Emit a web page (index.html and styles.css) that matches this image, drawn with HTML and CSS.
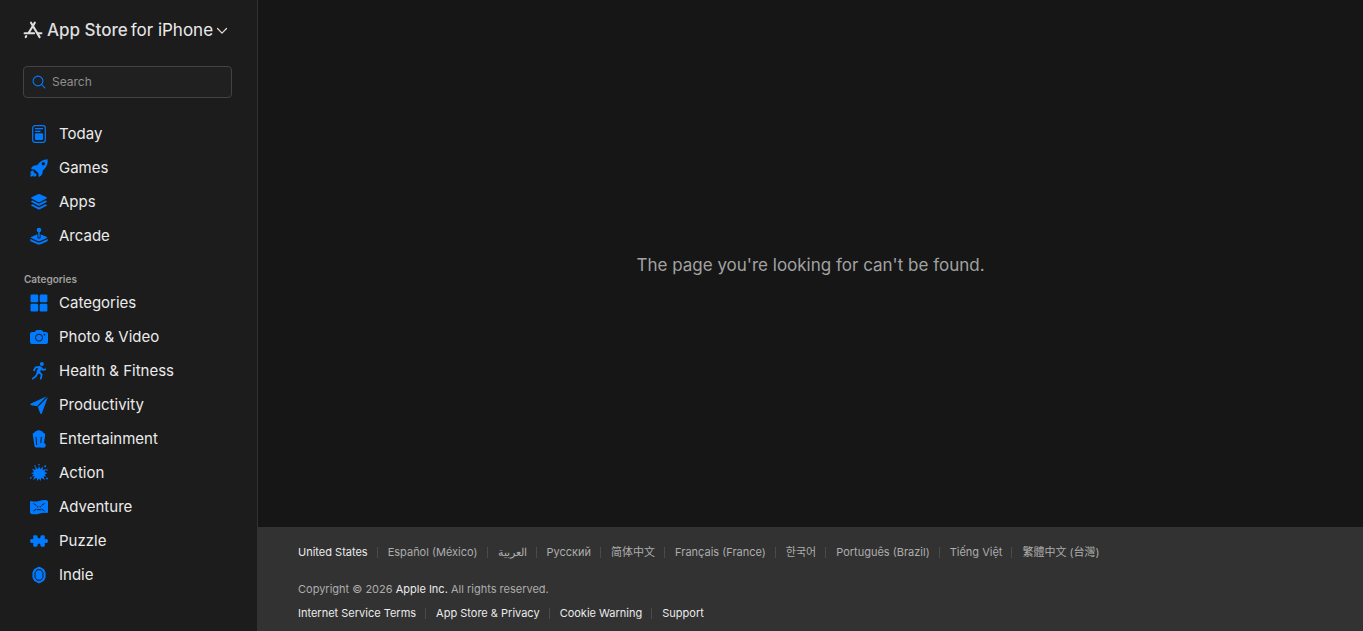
FILE: index.html
```html
<!DOCTYPE html>
<html lang="en">
<head>
    <meta charset="UTF-8">
    <meta name="viewport" content="width=device-width, initial-scale=1.0">
    <title>App Store</title>
    <link rel="stylesheet" href="styles.css">
</head>
<body>
    <div class="app">
        <aside class="sidebar">
            <button type="button" class="platform">
                <svg class="logo" viewBox="0 0 20 18" fill="none" stroke="currentColor" stroke-width="2.1" stroke-linecap="round">
                    <path d="M11.8 1.7 5.6 12M8 1.7l8.600 14.400M1.600 12.200h9.500M15 12.200h3.400M3.200 15.200l-.5.9"/>
                </svg>
                <span class="brand">App Store</span>
                <span class="device">for iPhone</span>
                <svg class="chevron" viewBox="0 0 12 8" fill="none" stroke="currentColor" stroke-width="1.2" stroke-linecap="round" stroke-linejoin="round">
                    <path d="M1.500 1.500 6 6.200l4.500-4.700"/>
                </svg>
            </button>

            <form class="search" role="search">
                <svg class="search-icon" viewBox="0 0 14 14" fill="none" stroke="currentColor" stroke-width="1.1" stroke-linecap="round">
                    <circle cx="6" cy="6" r="4.900"/>
                    <path d="m9.600 9.600 3.200 3.200"/>
                </svg>
                <input type="search" placeholder="Search" aria-label="Search">
            </form>

            <nav>
                <ul class="menu">
                    <li><a href="#today">
                        <svg class="icon" viewBox="0 0 20 20">
                            <rect x="3.700" y="1.700" width="12.600" height="16.600" rx="2.200" fill="none" stroke="currentColor" stroke-width="1.200"/>
                            <path fill="currentColor" d="M6 4h8v1.300H6zM6 6.800h5.500v1.300H6zM7 9.300h6a1 1 0 0 1 1 1V15a1 1 0 0 1-1 1H7a1 1 0 0 1-1-1v-4.700a1 1 0 0 1 1-1z"/>
                        </svg>
                        Today
                    </a></li>
                    <li><a href="#games">
                        <svg class="icon" viewBox="0 0 20 20" fill="currentColor">
                            <path fill-rule="evenodd" d="M18.700 1.300c.4 4.800-1.300 8.400-5 11.400.2 2.800-.8 4.700-3.200 6-.5.300-.9 0-.9-.5l-.2-3-3.800-3.800-3-.2c-.6 0-.8-.4-.5-.9 1.300-2.400 3.200-3.400 6-3.100 2.700-3.800 6.200-5.900 10.600-5.900zM14.300 4.100a1.700 1.700 0 1 0 0 3.400 1.700 1.700 0 0 0 0-3.400z"/>
                            <path d="M4.300 12.500c.2 1.800 1.300 3.200 3.200 3.400.4 2-1.300 3.100-3.200 2.600l.4-1.200c-1.200 1.300-2.300 1.300-3.400 1.300 0-1.300.2-2.400 1.200-3.400l-1.200.3c-.2-1.600 1-3.200 3-3z"/>
                        </svg>
                        Games
                    </a></li>
                    <li><a href="#apps">
                        <svg class="icon" viewBox="0 0 20 20" fill="currentColor">
                            <path d="M9 2.300q1-.5 2 0l6.500 3q1 .6 0 1.300L11 9.900q-1 .5-2 0L2.500 6.600q-1-.7 0-1.300z"/>
                            <path d="m2.500 9 1-.5L9 11.200q1 .5 2 0l5.500-2.700 1 .5q1 .5 0 1.100L11 13.600q-1 .5-2 0l-6.500-3.500q-1-.6 0-1.100z"/>
                            <path d="m2.500 12.700 1-.5L9 15q1 .5 2 0l5.500-2.800 1 .5q1 .5 0 1.100L11 17.300q-1 .5-2 0l-6.500-3.500q-1-.6 0-1.100z"/>
                        </svg>
                        Apps
                    </a></li>
                    <li><a href="#arcade">
                        <svg class="icon" viewBox="0 0 20 20" fill="currentColor">
                            <circle cx="10" cy="4" r="2.300"/>
                            <path d="M9.300 6h1.400v5.500H9.300z"/>
                            <path d="M8.400 8.200v3.700q1.600 1 3.200 0V8.200l6.300 2.700q1.200.6 0 1.200l-6.700 3q-1.200.5-2.400 0l-6.700-3q-1.200-.6 0-1.200z"/>
                            <path d="m1.200 13 7.400 3.300q1.400.5 2.800 0l7.400-3.300v1.300q0 .7-.8 1.100l-6.400 2.800q-1.600.7-3.200 0L2 15.400q-.8-.4-.8-1.100z"/>
                        </svg>
                        Arcade
                    </a></li>
                </ul>

                <h2 class="menu-title">Categories</h2>
                <ul class="menu">
                    <li><a href="#categories">
                        <svg class="icon" viewBox="0 0 20 20" fill="currentColor">
                            <rect x="1.500" y="1.500" width="7.700" height="7.700" rx="1.200"/>
                            <rect x="10.700" y="1.500" width="7.700" height="7.700" rx="1.200"/>
                            <rect x="1.500" y="10.700" width="7.700" height="7.700" rx="1.200"/>
                            <rect x="10.700" y="10.700" width="7.700" height="7.700" rx="1.200"/>
                        </svg>
                        Categories
                    </a></li>
                    <li><a href="#photo-video">
                        <svg class="icon" viewBox="0 0 20 20">
                            <path fill="currentColor" d="M3 5h2.500l1.300-1.600Q7.200 3 8 3h4q.8 0 1.200.4L14.500 5H17q2 0 2 2v8q0 2-2 2H3q-2 0-2-2V7q0-2 2-2z"/>
                            <circle class="cutout" cx="10" cy="10.700" r="3.500"/>
                            <circle class="cutout" cx="15.500" cy="7.700" r=".5"/>
                        </svg>
                        Photo &amp; Video
                    </a></li>
                    <li><a href="#health-fitness">
                        <svg class="icon" viewBox="0 0 20 20" fill="none" stroke="currentColor" stroke-linecap="round" stroke-linejoin="round">
                            <circle cx="12.900" cy="3" r="2" fill="currentColor" stroke="none"/>
                            <path stroke-width="3.400" d="m10.800 7-1.600 4.300"/>
                            <path stroke-width="1.800" d="M10.500 6 6.600 6.400 5 9.300M12 6.500l1.600 2.400 2.700-.6M10 11l2.700 2.600-.9 4M8.600 11.800l-1.700 3.400-3.200 2.400"/>
                        </svg>
                        Health &amp; Fitness
                    </a></li>
                    <li><a href="#productivity">
                        <svg class="icon" viewBox="0 0 20 20" fill="currentColor">
                            <path d="M1.500 8.800 17.700 1.300 8 11.200l-5.800-.9q-1.600-.7-.7-1.500z"/>
                            <path d="m18.900 2.100-6.100 16.300q-.9 1.200-1.600-.2L8.800 12z"/>
                        </svg>
                        Productivity
                    </a></li>
                    <li><a href="#entertainment">
                        <svg class="icon" viewBox="0 0 20 20">
                            <path fill="currentColor" d="M4 6.500Q3 4 5.500 3.500 6 1.500 8 2q1.500-1.700 3.200-.2 2-.5 2.800 1.600Q16.700 4 16 6.500z"/>
                            <path fill="currentColor" d="M3.800 6h12.400l-1.700 11q-.2 1.400-1.500 1.400H7q-1.300 0-1.500-1.400z"/>
                            <path class="cutout" d="M7 8l.7 8M12.300 8l-.5 6"/>
                            <circle fill="currentColor" cx="14.200" cy="16.300" r="2.500"/>
                        </svg>
                        Entertainment
                    </a></li>
                    <li><a href="#action">
                        <svg class="icon" viewBox="0 0 20 20" fill="currentColor">
                            <path d="m10 3 1.200 3.200 2.700-2.700-.2 3.700 3.500-1.400-1.800 3.300 3.200.9-3 1.400 1.800 2.100-2.900-.2 1.500 3.700-3.700-2.200-.7 3.200L10 15.500 8.300 18l-.6-3.200L4 17l1.700-3.700-3.200.3 2.400-2.200L2 10l3-.8-2-3.400L6.500 7l-.2-3.500L9 6.200z"/>
                            <circle cx="6" cy="3" r=".8"/>
                            <circle cx="10" cy="1.700" r=".8"/>
                            <circle cx="16.200" cy="3.200" r="1"/>
                            <circle cx="18" cy="7" r=".8"/>
                            <circle cx="1.800" cy="14.800" r=".9"/>
                            <circle cx="18" cy="15.500" r=".9"/>
                        </svg>
                        Action
                    </a></li>
                    <li><a href="#adventure">
                        <svg class="icon" viewBox="0 0 20 20">
                            <path fill="currentColor" d="M1 5.300Q1 4 2.300 4q4 1.200 7.700 0 4-1.200 7.700-.8 1.300.2 1.300 1.500v10q0 1.300-1.300 1.200-4-.4-7.700.8-4 1.200-7.700.2Q1 16.600 1 15.300z"/>
                            <path class="cutout" d="m4.500 6.500 3 2M15.500 6.500l-3 2M4.500 14l3-2M15.500 14l-3-2M8 12.700h4"/>
                            <path class="cutout" d="M8 9.800h1.300M10.700 9.800H12"/>
                        </svg>
                        Adventure
                    </a></li>
                    <li><a href="#puzzle">
                        <svg class="icon" viewBox="0 0 20 20" fill="currentColor">
                            <path d="M5.500 4.300h1.700q1.300 0 1.300 1.300 0 1.900 1.500 1.900t1.500-1.900q0-1.300 1.300-1.300h1.700q1.300 0 1.300 1.300v2.700q3.200-1 3.200 1.700t-3.200 1.700v2.700q0 1.300-1.300 1.300h-1.700q-1.300 0-1.300-1.300 0-1.900-1.500-1.900t-1.500 1.900q0 1.300-1.300 1.300H5.500q-1.300 0-1.300-1.300v-2.700Q1 12.700 1 10t3.200-1.700V5.600q0-1.300 1.300-1.300z"/>
                        </svg>
                        Puzzle
                    </a></li>
                    <li><a href="#indie">
                        <svg class="icon" viewBox="0 0 20 20">
                            <path fill="currentColor" d="M9 2q1-.5 2 0l3.300 1.700q.7.4 1 1.100l1 2.200q.3.600.3 1.300v3.400q0 .7-.3 1.300l-1 2.200q-.3.700-1 1.100L11 18q-1 .5-2 0l-3.300-1.700q-.7-.4-1-1.100L3.700 13q-.3-.6-.3-1.300V8.300q0-.7.3-1.300l1-2.200q.3-.7 1-1.100z"/>
                            <path class="cutout" d="m8 4.800h4l2 3v4.400l-2 3H8l-2-3V7.800z"/>
                        </svg>
                        Indie
                    </a></li>
                </ul>
            </nav>
        </aside>

        <div class="page">
            <main class="content">
                <p class="error">The page you're looking for can't be found.</p>
            </main>

            <footer class="footer">
                <ul class="links languages">
                    <li><a href="#us" class="current">United States</a></li>
                    <li><a href="#es-mx" lang="es">Español (México)</a></li>
                    <li><a href="#ar" lang="ar">العربية</a></li>
                    <li><a href="#ru" lang="ru">Русский</a></li>
                    <li><a href="#zh-cn" lang="zh-CN">简体中文</a></li>
                    <li><a href="#fr" lang="fr">Français (France)</a></li>
                    <li><a href="#ko" lang="ko">한국어</a></li>
                    <li><a href="#pt-br" lang="pt">Português (Brazil)</a></li>
                    <li><a href="#vi" lang="vi">Tiếng Việt</a></li>
                    <li><a href="#zh-tw" lang="zh-TW">繁體中文 (台灣)</a></li>
                </ul>
                <p class="copyright">Copyright © 2026 <a href="#apple">Apple Inc.</a> All rights reserved.</p>
                <ul class="links legal">
                    <li><a href="#terms">Internet Service Terms</a></li>
                    <li><a href="#privacy">App Store &amp; Privacy</a></li>
                    <li><a href="#cookies">Cookie Warning</a></li>
                    <li><a href="#support">Support</a></li>
                </ul>
            </footer>
        </div>
    </div>
</body>
</html>
```
FILE: styles.css
```css
* {
    box-sizing: border-box;
}
body {
    margin: 0;
    font-family: Inter, "Noto Sans CJK SC", sans-serif;
    background-color: #161616;
    color: #ebebeb;
}
a {
    color: inherit;
    text-decoration: none;
}
ul {
    list-style: none;
    margin: 0;
    padding: 0;
}
.app {
    display: grid;
    grid-template-columns: 258px 1fr;
    min-height: 100vh;
}

/* Sidebar */
.sidebar {
    background-color: #1c1c1c;
    border-right: 1px solid #323232;
    padding: 18px 25px 18px 23px;
}
.platform {
    display: flex;
    align-items: center;
    width: 100%;
    height: 24px;
    padding: 0;
    border: 0;
    background: none;
    color: #dfdfdf;
    font-family: inherit;
    font-size: 17px;
    white-space: nowrap;
    cursor: pointer;
}
.logo {
    width: 20px;
    height: 18px;
    margin-right: 4px;
}
.brand {
    font-weight: 500;
}
.device {
    margin-left: 3px;
    color: #ebebeb;
}
.chevron {
    width: 12px;
    height: 8px;
    margin: 2px 0 0 3px;
}
.search {
    position: relative;
    margin: 24px 0 18px;
}
.search-icon {
    position: absolute;
    left: 9px;
    top: 9px;
    width: 14px;
    height: 14px;
    color: #007aff;
}
.search input {
    display: block;
    width: 100%;
    height: 32px;
    padding: 0 8px 2px 28px;
    border: 1px solid #424242;
    border-radius: 4px;
    background-color: #202020;
    color: #ebebeb;
    font-family: inherit;
    font-size: 12px;
}
.search input::placeholder {
    color: #8e8e8e;
}
.menu a {
    display: flex;
    align-items: center;
    gap: 10px;
    height: 34px;
    padding-left: 6px;
    font-size: 15px;
}
.icon {
    width: 20px;
    height: 20px;
    margin-top: 2px;
    color: #007aff;
}
.cutout {
    fill: none;
    stroke: #1c1c1c;
    stroke-width: 1;
}
.menu-title {
    margin: 21px 0 0 1px;
    font-size: 10px;
    line-height: 12px;
    font-weight: 600;
    color: #a0a0a0;
}

/* Page */
.page {
    display: flex;
    flex-direction: column;
}
.content {
    flex: 1;
    display: flex;
    align-items: center;
    justify-content: center;
}
.error {
    margin: 0;
    padding-top: 2px;
    font-size: 17px;
    line-height: 24px;
    color: #a2a2a2;
}
.footer {
    padding: 17px 40px 10px;
    background-color: #323232;
    color: #adadad;
    font-size: 11px;
    line-height: 16px;
}
.links {
    display: flex;
    flex-wrap: wrap;
}
.links li {
    display: flex;
    align-items: center;
    white-space: nowrap;
}
.links li + li::before {
    content: "";
    width: 1px;
    height: 11px;
    margin: 0 10px 0 9px;
    background-color: #4a4a4a;
}
.current,
.copyright a,
.legal {
    color: #ebebeb;
}
.copyright {
    margin: 21px 0 8px;
}
```
